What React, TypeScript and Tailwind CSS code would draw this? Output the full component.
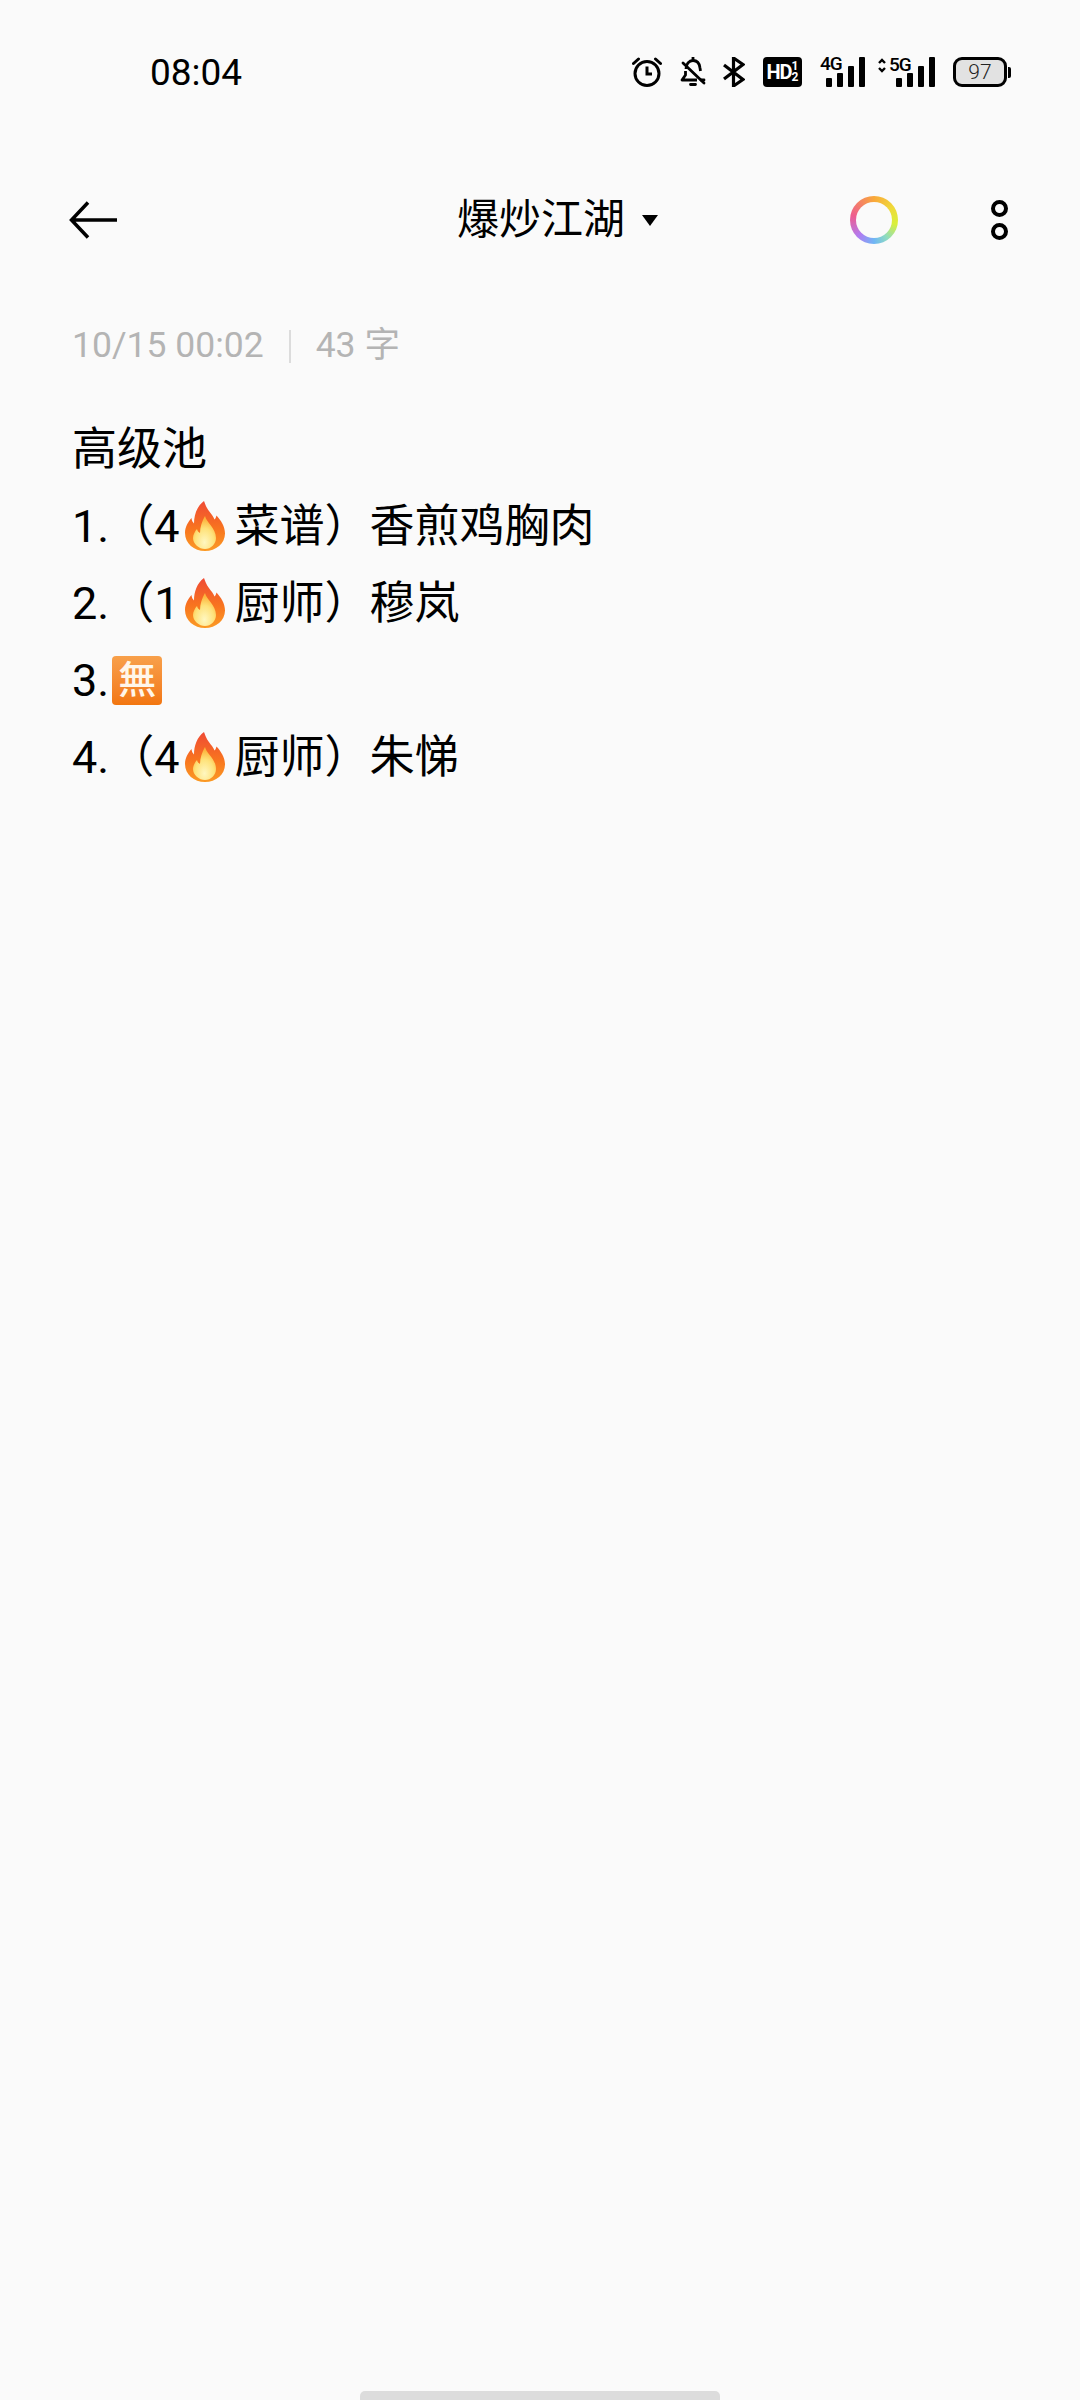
import { ReactNode, useId } from 'react'

function Flame() {
  const id = useId()
  return (
    <svg viewBox="0 0 40 50" className="inline-block w-[40px] h-[50px] ml-[6px] mr-[9px] align-[-9px]">
      <defs>
        <linearGradient id={id + 'o'} x1="0" y1="0" x2="0" y2="1">
          <stop offset="0" stopColor="#ef4a35" />
          <stop offset="0.55" stopColor="#f8741f" />
          <stop offset="1" stopColor="#fb9a24" />
        </linearGradient>
        <radialGradient id={id + 'i'} cx="0.5" cy="0.8" r="0.7">
          <stop offset="0" stopColor="#fff7c0" />
          <stop offset="0.6" stopColor="#fee27a" />
          <stop offset="1" stopColor="#fdb43c" />
        </radialGradient>
      </defs>
      <path
        d="M19 0c2 6 4 9 8 14 1 1.500 2 3 2.500 4.500 1-1 1.700-2.500 2-4 4.500 5 8.500 11 8.500 18C40 42.500 31 50 20 50S0 42.500 0 32c0-6 3-11 6.500-15 .3 2.500 1 4 2.500 5.500C9 14 12 5 19 0z"
        fill={`url(#${id}o)`}
      />
      <path
        d="M20 15c1 6 11 12 11 22 0 6-5 11-11 11s-12-5-12-11c0-3 2-7 4-9 .3 2 1.500 3 3 4C15 26 17 20 20 15z"
        fill={`url(#${id}i)`}
      />
    </svg>
  )
}

function NoneBadge() {
  return (
    <span className="inline-flex w-[50px] h-[49px] ml-[3px] items-center justify-center rounded-[4px] bg-gradient-to-b from-[#f8a04a] to-[#f2760e] text-[#fff6ea] text-[38px] font-medium leading-none align-[3px]">
      無
    </span>
  )
}

function Line({ children }: { children: ReactNode }) {
  return <div className="h-[77px] leading-[77px] whitespace-nowrap">{children}</div>
}

function Bars() {
  return (
    <div className="flex items-end gap-[5px]">
      <span className="w-[6px] h-[9px] bg-black rounded-[1px]" />
      <span className="w-[6px] h-[14px] bg-black rounded-[1px]" />
      <span className="w-[6px] h-[21px] bg-black rounded-[1px]" />
      <span className="w-[6px] h-[30px] bg-black rounded-[1px]" />
    </div>
  )
}

function StatusIcons() {
  return (
    <div className="flex items-center h-[30px]">
      <svg viewBox="0 0 30 30" className="w-[30px] h-[30px]" fill="none" stroke="#000" strokeWidth="3">
        <circle cx="15" cy="16.500" r="12" />
        <path d="M15 9.500v7.500h5" />
        <path d="M1.500 6.500 6.500 2M28.500 6.500 23.500 2" strokeLinecap="round" />
      </svg>
      <svg viewBox="0 0 26 30" className="w-[26px] h-[30px] ml-[18px]" fill="none" stroke="#000" strokeWidth="2.800">
        <path d="M6 12c0-5 3-8.500 7-8.500s6.500 3 7 7.500l.5 3M17 23H2l3.500-5V14" strokeLinejoin="round" />
        <path d="M13 0v3.500M10.500 27.500h5M21 23h3" strokeLinecap="round" />
        <path d="M3 6l21 20" strokeLinecap="round" />
      </svg>
      <svg viewBox="0 0 22 30" className="w-[22px] h-[30px] ml-[17px]" fill="none" stroke="#000" strokeWidth="3.200">
        <path d="M1 8l19 14.500L10.500 29V1L20 7.500 1 22" strokeLinejoin="miter" />
      </svg>
      <div className="flex items-center justify-center w-[39px] h-[30px] ml-[18px] bg-black rounded-[4px] text-white font-bold leading-none">
        <span className="text-[20px] tracking-[-1px] font-['Liberation_Sans_Narrow','Roboto',sans-serif]">HD</span>
        <span className="flex flex-col items-center text-[12px] leading-[11px]">
          <span>1</span>
          <span>2</span>
        </span>
      </div>
      <div className="relative w-[45px] h-[30px] ml-[18px] flex justify-end">
        <Bars />
        <span className="absolute left-0 top-[-3px] text-[19px] leading-[20px] font-medium tracking-[-1px]">4G</span>
      </div>
      <div className="relative w-[57px] h-[30px] ml-[13px] flex justify-end">
        <Bars />
        <span className="absolute left-[11px] top-[-2px] text-[19px] leading-[20px] font-medium tracking-[-1px]">5G</span>
        <svg viewBox="0 0 8 15" className="absolute left-0 top-[1px] w-[8px] h-[15px]" fill="none" stroke="#000" strokeWidth="2.400">
          <path d="M1 5l3-3 3 3M1 10l3 3 3-3" />
        </svg>
      </div>
      <div className="flex items-center ml-[18px]">
        <div className="flex items-center justify-center w-[54px] h-[30px] border-[3px] border-black rounded-[9px] bg-[#e2e2e2] text-[21px] leading-none text-[#222] font-light">
          97
        </div>
        <span className="w-[3px] h-[11px] ml-[1px] bg-black rounded-r-[2px]" />
      </div>
    </div>
  )
}

export default function App() {
  return (
    <div className="w-[1080px] h-[2400px] bg-[#fafafa] text-black flex flex-col font-['Roboto','Noto_Sans_CJK_SC',sans-serif]">
      <div className="flex items-center justify-between h-[30px] mt-[57px] pl-[150px] pr-[69px]">
        <span className="text-[37px] leading-none">08:04</span>
        <StatusIcons />
      </div>

      <div className="flex items-center justify-between h-[60px] mt-[103px] pl-[69px] pr-[72px]">
        <svg viewBox="0 0 48 38" className="w-[48px] h-[38px]" fill="none" stroke="#000" strokeWidth="3.500">
          <path d="M48 19H3M19 1.500 2.500 19 19 36.500" />
        </svg>
        <div className="flex items-center ml-[148px]">
          <span className="text-[42px] leading-none">爆炒江湖</span>
          <span className="ml-[17px] w-0 h-0 border-x-[8px] border-x-transparent border-t-[11px] border-t-black" />
        </div>
        <div className="flex items-center gap-[93px]">
          <div className="flex items-center justify-center w-[48px] h-[48px] rounded-full bg-[conic-gradient(#f9a83a,#f0d83a_15%,#d9f03a_28%,#8fdcc0_40%,#6fb6f5_50%,#b07cf2_62%,#ee5c90_78%,#f9a83a)]">
            <div className="w-[36px] h-[36px] rounded-full bg-[#fafafa]" />
          </div>
          <div className="flex flex-col gap-[6px]">
            <span className="w-[17px] h-[17px] rounded-full border-[4px] border-black" />
            <span className="w-[17px] h-[17px] rounded-full border-[4px] border-black" />
          </div>
        </div>
      </div>

      <div className="flex items-center h-[40px] mt-[76px] pl-[72px] text-[35.500px] leading-none text-[#b4b4b4]">
        <span>10/15 00:02</span>
        <span className="w-[2px] h-[33px] mx-[25px] bg-[#dcdcdc]" />
        <span>43 字</span>
      </div>

      <div className="mt-[45px] pl-[72px] text-[45px]">
        <Line>高级池</Line>
        <Line>
          1.（4<Flame />菜谱）香煎鸡胸肉
        </Line>
        <Line>
          2.（1<Flame />厨师）穆岚
        </Line>
        <Line>
          3.<NoneBadge />
        </Line>
        <Line>
          4.（4<Flame />厨师）朱悌
        </Line>
      </div>

      <div className="mt-auto mx-auto w-[360px] h-[9px] bg-[#dcdcdc] rounded-t-[5px]" />
    </div>
  )
}
